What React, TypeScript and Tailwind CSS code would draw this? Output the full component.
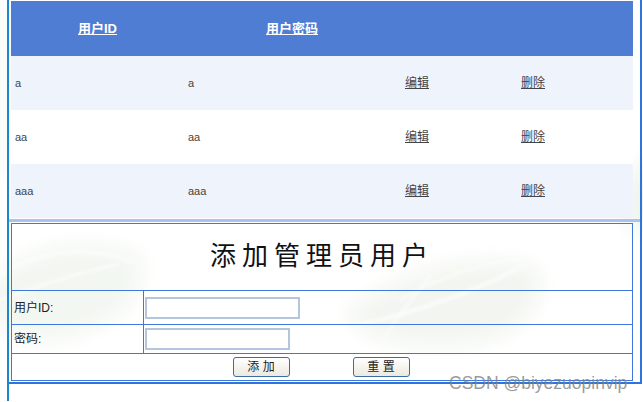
const rows = ['a', 'aa', 'aaa'];

const cjk = 'font-["Liberation_Sans","Noto_Sans_CJK_SC",sans-serif]';

function Leaves() {
  return (
    <svg className="absolute inset-0" width="643" height="402" viewBox="0 0 643 402">
      <defs>
        <filter id="soft" x="-20%" y="-20%" width="140%" height="140%">
          <feGaussianBlur stdDeviation="10" />
        </filter>
        <filter id="softer" x="-20%" y="-20%" width="140%" height="140%">
          <feGaussianBlur stdDeviation="1.5" />
        </filter>
      </defs>
      {/* top left corner */}
      <path d="M0 0 L8 0 L8 150 L0 190 Z" fill="#eef4ea" filter="url(#soft)" />
      {/* left leaf */}
      <path d="M-20 290 C 30 240 90 235 140 255 C 150 290 125 325 60 340 C 20 345 -10 335 -20 290 Z" fill="#f3f7f1" filter="url(#soft)" />
      <path d="M0 275 C 40 250 90 245 132 262" stroke="#fbfdfa" strokeWidth="3" fill="none" filter="url(#softer)" />
      <path d="M0 300 C 40 285 80 272 120 264" stroke="#fbfdfa" strokeWidth="2" fill="none" filter="url(#softer)" />
      {/* right leaf */}
      <path d="M345 315 C 390 270 480 250 535 265 C 552 295 530 335 470 345 C 420 350 365 345 345 315 Z" fill="#f3f6f0" filter="url(#soft)" />
      <path d="M355 325 C 410 315 480 290 530 262" stroke="#fcfdfb" strokeWidth="3" fill="none" filter="url(#softer)" />
      <path d="M380 345 C 400 310 425 285 430 275" stroke="#fcfdfb" strokeWidth="2" fill="none" filter="url(#softer)" />
      <path d="M400 300 C 440 275 490 262 525 258" stroke="#fcfdfb" strokeWidth="2" fill="none" filter="url(#softer)" />
      {/* top right */}
      <path d="M625 225 C 622 190 635 160 660 150 L660 235 Z" fill="#eef4ea" filter="url(#soft)" />
    </svg>
  );
}

export default function App() {
  return (
    <div className={`relative w-[643px] h-[402px] overflow-hidden bg-white ${cjk}`}>
      <Leaves />
      <div className="relative ml-[7px] h-[401px] w-[635px] border-l-2 border-[#1b86d2]">
        <div className="h-[384px] border-r-2 border-b-2 border-[#2f74dc] pt-px">
          <table className="ml-[2px] w-[622px] table-fixed border-collapse text-[11px] text-[#444444]">
            <thead>
              <tr className="h-[55px] bg-[#4f7dd3] text-[13px] font-bold text-white">
                <th className="w-[173px]"><a className="underline">用户ID</a></th>
                <th className="w-[216px]"><a className="underline">用户密码</a></th>
                <th className="w-[116px]"></th>
                <th className="w-[117px]"></th>
              </tr>
            </thead>
            <tbody>
              {rows.map((r, i) => (
                <tr key={r} className={`${i === 1 ? 'h-[54px] bg-white' : 'h-[54px] bg-[#eef3fc]'}`}>
                  <td className="pl-[4px]">{r}</td>
                  <td className="pl-[4px]">{r}</td>
                  <td className="pl-[5px] text-[12px]"><a className="underline">编辑</a></td>
                  <td className="pl-[5px] text-[12px]"><a className="underline">删除</a></td>
                </tr>
              ))}
            </tbody>
          </table>
          <div className="mt-[1px] h-[3px] bg-[#a9c3ee]"></div>
          <table className="ml-[2px] mt-[1px] w-[622px] table-fixed border-collapse border border-[#3f78dc] text-[12px] text-[#222222]">
            <colgroup>
              <col className="w-[132px]" />
              <col />
            </colgroup>
            <tbody>
              <tr className="h-[67px]">
                <td colSpan={2} className="border border-[#3f78dc] pb-[3px] text-center text-[26px] leading-none tracking-[6px] text-[#111111]">
                  添加管理员用户
                </td>
              </tr>
              <tr className="h-[34px]">
                <td className="border border-[#3f78dc] pl-[2px]">用户ID:</td>
                <td className="border border-[#3f78dc] pl-[1px]">
                  <input className="block h-[22px] w-[155px] border-2 border-[#b3c6de] bg-white" />
                </td>
              </tr>
              <tr className="h-[29px]">
                <td className="border border-[#3f78dc] pl-[2px]">密码:</td>
                <td className="border border-[#3f78dc] pl-[1px]">
                  <input className="block h-[22px] w-[145px] border-2 border-[#b3c6de] bg-white" />
                </td>
              </tr>
              <tr className="h-[27px]">
                <td colSpan={2} className="border border-[#3f78dc]">
                  <div className="flex justify-center gap-[63px] pr-[2px]">
                    <button className="h-[20px] w-[57px] rounded-[3px] border border-[#3a6ea5] bg-gradient-to-b from-white to-[#ece9df] text-[12px] leading-none">添 加</button>
                    <button className="h-[20px] w-[57px] rounded-[3px] border border-[#3a6ea5] bg-gradient-to-b from-white to-[#ece9df] text-[12px] leading-none">重 置</button>
                  </div>
                </td>
              </tr>
            </tbody>
          </table>
        </div>
      </div>
      <span className="absolute left-[449px] top-[373px] text-[17.5px] leading-[20px] text-[#808080]/80">CSDN @biyezuopinvip</span>
    </div>
  );
}
